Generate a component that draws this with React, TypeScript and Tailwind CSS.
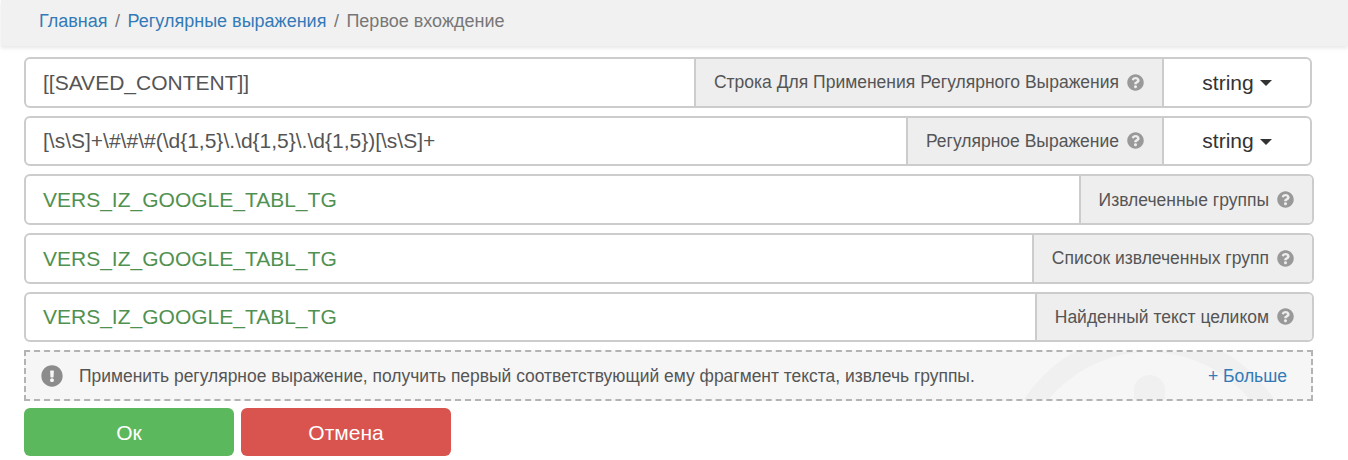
import { FaQuestionCircle, FaExclamationCircle } from 'react-icons/fa'

const font = { sans: "font-['Liberation_Sans',Arial,sans-serif]" }

function Label({ text }: { text: string }) {
  return (
    <div className="flex items-center gap-2 bg-[#eeeeee] border-l-2 border-[#cccccc] pl-[18px] pr-[18px] text-[17.5px] text-[#555555] whitespace-nowrap">
      <span>{text}</span>
      <FaQuestionCircle className="w-[17px] h-[17px] text-[#999999]" />
    </div>
  )
}

function Dropdown() {
  return (
    <div className="w-[148px] flex items-center justify-center gap-[6px] border-l-2 border-[#cccccc] text-[21px] text-[#333333]">
      <span>string</span>
      <span className="w-0 h-0 mt-[2px] border-x-[6px] border-x-transparent border-t-[6px] border-t-[#333333]" />
    </div>
  )
}

function Row({ value, label, green, dropdown }: { value: string; label: string; green?: boolean; dropdown?: boolean }) {
  return (
    <div className={`flex h-[50.67px] mb-[8px] border-2 border-[#cccccc] rounded-md overflow-hidden bg-white ${dropdown ? 'mr-px' : '-mr-px'}`}>
      <div className={`flex-1 flex items-center pl-[17px] text-[21px] whitespace-nowrap ${green ? 'text-[#4f9150]' : 'text-[#555555]'}`}>
        {value}
      </div>
      <Label text={label} />
      {dropdown && <Dropdown />}
    </div>
  )
}

export default function App() {
  return (
    <div className={`${font.sans} w-[1348px] h-[460px] overflow-hidden bg-white`}>
      {/* Breadcrumb */}
      <div className="h-[46px] ml-px bg-[#f1f1f1] flex items-center pl-[38px] pb-[4px] gap-[7.5px] text-[18px] shadow-[0_2px_4px_rgba(0,0,0,0.1)]">
        <a className="text-[#337ab7]">Главная</a>
        <span className="text-[#777777]">/</span>
        <a className="text-[#337ab7]">Регулярные выражения</a>
        <span className="text-[#777777]">/</span>
        <span className="text-[#777777]">Первое вхождение</span>
      </div>

      <div className="pt-[11px] pl-[24px] pr-[35px]">
        <Row value="[[SAVED_CONTENT]]" label="Строка Для Применения Регулярного Выражения" dropdown />
        <Row value="[\s\S]+\#\#\#(\d{1,5}\.\d{1,5}\.\d{1,5})[\s\S]+" label="Регулярное Выражение" dropdown />
        <Row value="VERS_IZ_GOOGLE_TABL_TG" label="Извлеченные группы" green />
        <Row value="VERS_IZ_GOOGLE_TABL_TG" label="Список извлеченных групп" green />
        <Row value="VERS_IZ_GOOGLE_TABL_TG" label="Найденный текст целиком" green />

        {/* Info box */}
        <div className="relative h-[51px] border-2 border-dashed border-[#b3b3b3] bg-[#f6f6f6] overflow-hidden flex items-center pl-[15px] pr-[24px] text-[17.5px]">
          <svg className="absolute left-[998px] top-[-2px]" width="260" height="51" viewBox="0 0 260 51">
            <circle cx="125" cy="132" r="140" fill="none" stroke="#f0f0f0" strokeWidth="20" />
            <rect x="110" y="25" width="31" height="60" rx="15.5" fill="#f0f0f0" />
          </svg>
          <FaExclamationCircle className="relative w-[22px] h-[22px] text-[#8c8c8c]" />
          <span className="relative ml-[16px] text-[17.44px] text-[#555555]">
            Применить регулярное выражение, получить первый соответствующий ему фрагмент текста, извлечь группы.
          </span>
          <a className="relative ml-auto text-[#337ab7]">+ Больше</a>
        </div>

        {/* Buttons */}
        <div className="flex gap-[7px] mt-[7px]">
          <button className="w-[210px] h-[48px] rounded-md bg-[#5cb85c] text-white text-[21px]">Ок</button>
          <button className="w-[210px] h-[48px] rounded-md bg-[#d9534f] text-white text-[21px]">Отмена</button>
        </div>
      </div>
    </div>
  )
}
